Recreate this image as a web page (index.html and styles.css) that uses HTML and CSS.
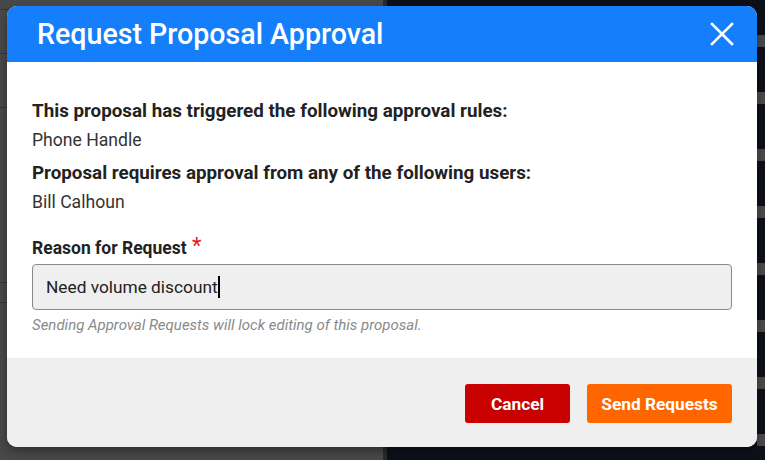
FILE: index.html
```html
<!DOCTYPE html>
<html>
<head>
<meta charset="utf-8">
<link rel="stylesheet" href="styles.css">
</head>
<body>
<div class="backdrop">
  <div class="bg-left"></div>
  <div class="bg-right"><div class="bg-strip"></div></div>
</div>
<div class="modal">
  <div class="modal-header">
    <h1 class="modal-title">Request Proposal Approval</h1>
    <button class="close-btn" aria-label="Close">
      <svg width="24" height="24" viewBox="0 0 24 24"><path d="M2 2L22 22M22 2L2 22" stroke="#fff" stroke-width="2.6" stroke-linecap="square"/></svg>
    </button>
  </div>
  <div class="modal-body">
    <div class="info-label">This proposal has triggered the following approval rules:</div>
    <div class="info-value">Phone Handle</div>
    <div class="info-label">Proposal requires approval from any of the following users:</div>
    <div class="info-value">Bill Calhoun</div>
    <div class="field">
      <label class="field-label">Reason for Request <span class="req">*</span></label>
      <div class="input"><span class="input-text">Need volume discount</span><span class="caret"></span></div>
      <div class="hint">Sending Approval Requests will lock editing of this proposal.</div>
    </div>
  </div>
  <div class="modal-footer">
    <button class="btn btn-cancel">Cancel</button>
    <button class="btn btn-send">Send Requests</button>
  </div>
</div>
</body>
</html>
```
FILE: styles.css
```css
* { box-sizing: border-box; }
html, body { margin: 0; padding: 0; }
body {
  width: 765px;
  height: 460px;
  overflow: hidden;
  font-family: Roboto, "Liberation Sans", Arial, sans-serif;
  position: relative;
  background: #484848;
}
.backdrop {
  display: flex;
  height: 460px;
}
.bg-left {
  width: 383px;
  background:
    linear-gradient(#482848, #482848) 0 9px / 100% 1px no-repeat,
    linear-gradient(#333, #333) 0 53px / 100% 1px no-repeat,
    linear-gradient(#333, #333) 0 107px / 100% 1px no-repeat,
    linear-gradient(#482848, #482848) 0 282px / 100% 1px no-repeat,
    linear-gradient(#333, #333) 0 302px / 100% 1px no-repeat,
    #484848;
}
.bg-right {
  flex: 1;
  background: #0e1019;
  border-left: 4px solid #2a2a2a;
  display: flex;
  justify-content: flex-end;
}
.bg-strip {
  width: 8px;
  height: 100%;
  background: repeating-linear-gradient(to bottom, #0e1019 0, #0e1019 35px, #4a4a4a 35px, #4a4a4a 47px, #0e1019 47px, #0e1019 57px);
}
.modal {
  position: absolute;
  left: 7px;
  top: 6px;
  width: 750px;
  height: 441px;
  border-radius: 10px;
  overflow: hidden;
  display: flex;
  flex-direction: column;
  background: #fff;
  box-shadow: 0 4px 10px rgba(0,0,0,0.35);
}
.modal-header {
  height: 56px;
  flex: none;
  background: #157efb;
  display: flex;
  align-items: center;
  justify-content: space-between;
  padding: 0 23px 0 30px;
}
.modal-title {
  margin: 0;
  color: #fff;
  font-size: 28.6px;
  font-weight: 500;
  line-height: 34px;
}
.close-btn {
  background: none;
  border: 0;
  padding: 0;
  width: 24px;
  height: 24px;
  display: flex;
}
.modal-body {
  flex: 1;
  padding: 36px 25px 0 25px;
  color: #222;
}
.info-label {
  font-size: 18.8px;
  font-weight: 700;
  line-height: 26px;
  color: #222;
}
.info-value {
  font-size: 17.6px;
  line-height: 22px;
  color: #333;
  margin: 5px 0 9px;
}
.field { margin-top: 24px; }
.field-label {
  display: block;
  font-size: 17.5px;
  font-weight: 700;
  line-height: 22px;
  color: #222;
}
.req { color: #e81c1c; font-size: 22px; font-weight: 400; vertical-align: top; line-height: 18px; margin-left: 1px; }
.input {
  margin-top: 5px;
  height: 46px;
  background: #efefef;
  border: 1px solid #8a8a8a;
  border-radius: 4px;
  display: flex;
  align-items: center;
  padding-left: 13px;
  font-size: 17.3px;
  color: #222;
}
.caret {
  display: inline-block;
  width: 2px;
  height: 22px;
  background: #000;
}
.hint {
  margin-top: 6px;
  font-size: 15px;
  line-height: 18px;
  font-style: italic;
  color: #8a8a8a;
}
.modal-footer {
  height: 89px;
  flex: none;
  background: #efefef;
  display: flex;
  justify-content: flex-end;
  align-items: flex-start;
  gap: 17px;
  padding: 26px 25px 0 0;
}
.btn {
  height: 39px;
  border: 0;
  border-radius: 3px;
  color: #fff;
  font-family: Roboto, "Liberation Sans", Arial, sans-serif;
  font-size: 17.3px;
  font-weight: 700;
  padding: 0;
}
.btn-cancel { background: #c80000; width: 105px; }
.btn-send { background: #ff6600; width: 145px; }
```
